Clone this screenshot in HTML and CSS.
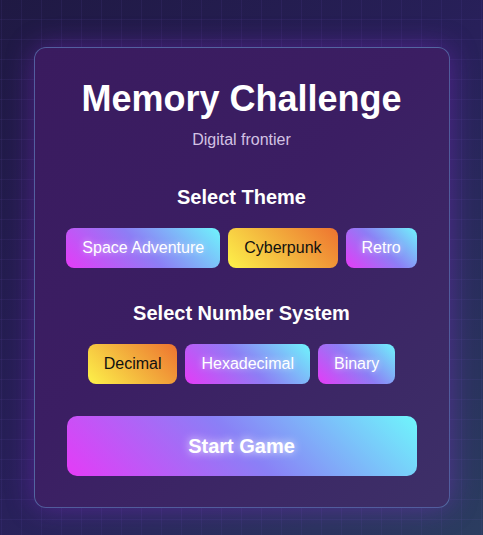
FILE: index.html
```html
<!DOCTYPE html>
<html lang="en">
<head>
<meta charset="utf-8">
<title>Memory Challenge</title>
<link rel="stylesheet" href="styles.css">
</head>
<body>
  <main class="card">
    <h1 class="title">Memory Challenge</h1>
    <p class="subtitle">Digital frontier</p>

    <section class="group">
      <h2 class="group-title">Select Theme</h2>
      <div class="options">
        <button class="opt opt-neon">Space Adventure</button>
        <button class="opt opt-sun">Cyberpunk</button>
        <button class="opt opt-neon">Retro</button>
      </div>
    </section>

    <section class="group group-second">
      <h2 class="group-title">Select Number System</h2>
      <div class="options">
        <button class="opt opt-sun">Decimal</button>
        <button class="opt opt-neon">Hexadecimal</button>
        <button class="opt opt-neon">Binary</button>
      </div>
    </section>

    <button class="start">Start Game</button>
  </main>
</body>
</html>
```
FILE: styles.css
```css
* { box-sizing: border-box; }

html, body { height: 100%; }

body {
  margin: 0;
  min-height: 100vh;
  font-family: "Liberation Sans", Arial, sans-serif;
  color: #fff;
  display: flex;
  flex-direction: column;
  align-items: center;
  padding-top: 47px;
  background-color: #221b48;
  background-image:
    linear-gradient(rgba(120, 90, 200, 0.09) 1px, transparent 1px),
    linear-gradient(90deg, rgba(120, 90, 200, 0.09) 1px, transparent 1px),
    linear-gradient(135deg, #1f1943 0%, #28205a 50%, #2b3d60 100%);
  background-size: 20px 20px, 20px 20px, 100% 100%;
  background-position: 1px -1px, 1px -1px, 0 0;
}

.card {
  width: 416px;
  padding: 30px 32px 31px;
  border: 1px solid rgba(110, 170, 230, 0.45);
  border-radius: 12px;
  background: linear-gradient(135deg, #3a1b5f 0%, #3b1e63 45%, #3d3068 100%);
  box-shadow: 0 0 28px rgba(160, 50, 240, 0.35);
  display: flex;
  flex-direction: column;
  align-items: stretch;
  text-align: center;
}

.title {
  margin: 0 0 11px;
  font-size: 36px;
  font-weight: 700;
  line-height: normal;
}

.subtitle {
  margin: 0 0 37px;
  font-size: 16px;
  line-height: normal;
  color: rgba(240, 225, 255, 0.85);
}

.group-title {
  margin: 0 0 19px;
  font-size: 20px;
  font-weight: 700;
  line-height: normal;
}

.group-second { margin-top: 34px; }

.options {
  display: flex;
  justify-content: center;
  gap: 8px;
}

.opt {
  border: 0;
  border-radius: 8px;
  padding: 10px 16px;
  font-family: inherit;
  font-size: 16px;
  line-height: 20px;
  white-space: nowrap;
  flex: none;
  cursor: pointer;
}

.opt-neon {
  color: #fff;
  background: linear-gradient(45deg, #e53bf7 0%, #8d7ef5 50%, #6ff4fc 100%);
  text-shadow: 0 0 6px rgba(255, 255, 255, 0.55);
}

.opt-sun {
  color: #111;
  background: linear-gradient(45deg, #fdf24a 0%, #f3b23d 50%, #ee7330 100%);
}

.start {
  margin-top: 32px;
  height: 60px;
  border: 0;
  border-radius: 10px;
  font-family: inherit;
  font-size: 20px;
  font-weight: 700;
  color: #fff;
  background: linear-gradient(45deg, #e53bf7 0%, #8a80f6 50%, #6ff6fc 100%);
  text-shadow: 0 0 8px rgba(255, 255, 255, 0.9);
  cursor: pointer;
}
```
